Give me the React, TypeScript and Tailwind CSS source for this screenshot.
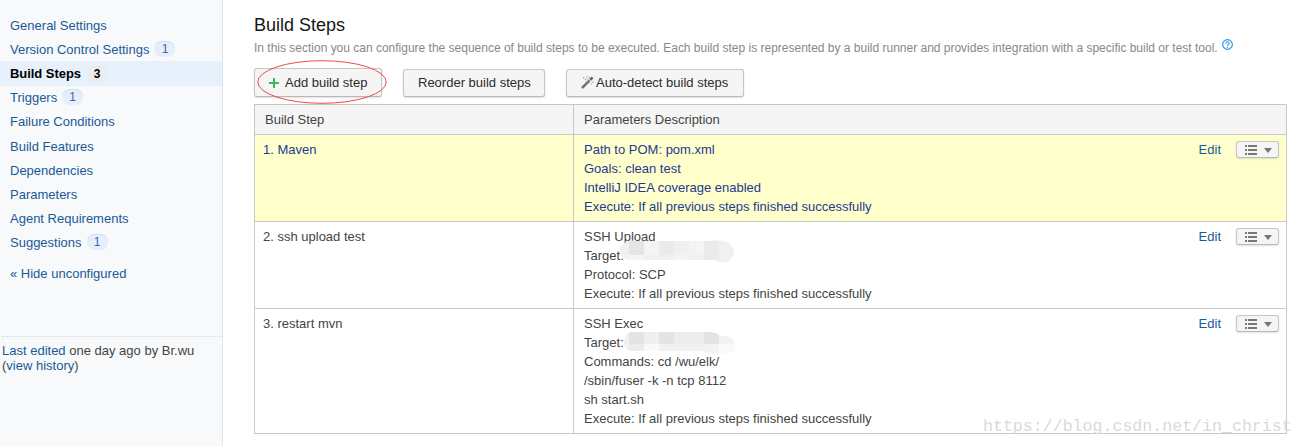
import type { ReactNode } from 'react';

type NavItem = { label: string; count?: number; active?: boolean; className?: string };

const navItems: NavItem[] = [
  { label: 'General Settings' },
  { label: 'Version Control Settings', count: 1 },
  { label: 'Build Steps', count: 3, active: true },
  { label: 'Triggers', count: 1 },
  { label: 'Failure Conditions', className: 'mb-px' },
  { label: 'Build Features' },
  { label: 'Dependencies' },
  { label: 'Parameters' },
  { label: 'Agent Requirements' },
  { label: 'Suggestions', count: 1 },
];

function Sidebar() {
  return (
    <aside className="flex w-[223px] shrink-0 flex-col border-r border-[#dfe3ea] bg-[#f7f9fb] pt-[13px] text-[#1a5a96]">
      <nav>
        {navItems.map((item) => (
          <a
            key={item.label}
            className={`flex items-center pl-[10px] ${
              item.active ? '-mb-px h-[25px] bg-[#e6f1fc] font-bold text-black' : 'h-[24px]'
            } ${item.className ?? ''}`}
          >
            <span className={item.active ? 'tracking-[-0.05px]' : 'pt-[2px]'}>{item.label}</span>
            {item.count !== undefined && (
              <span
                className={`flex h-4 items-center justify-center rounded-full ${
                  item.active
                    ? 'ml-[6px] w-[20px] bg-[#ededed] text-[12px] shadow-[inset_0_1px_0_#e2e6ea]'
                    : 'ml-[5px] w-[21px] bg-[#e5eefa] text-[12px] text-[#3b66a8] shadow-[inset_0_1px_0_#d3dfee]'
                }`}
              >
                {item.count}
              </span>
            )}
          </a>
        ))}
      </nav>
      <a className="mt-[12px] pl-[10px] leading-[15px]">« Hide unconfigured</a>
      <div className="ml-[2px] mt-[55px] border-t border-dotted border-[#d5d9df] pt-[6px] leading-[15px] text-[#444]">
        <div>
          <a className="text-[#1a5a96]">Last edited</a> one day ago by Br.wu
        </div>
        <div>
          (<a className="text-[#1a5a96]">view history</a>)
        </div>
      </div>
    </aside>
  );
}

function Button({ children, className }: { children: ReactNode; className: string }) {
  return (
    <button
      className={`flex items-center rounded-[3px] border border-[#c6c6c6] border-b-[#b8b8b8] bg-[#f5f5f5] text-[#2b2b2b] shadow-[0_1px_2px_rgba(0,0,0,0.12)] ${className}`}
    >
      {children}
    </button>
  );
}

function WandIcon() {
  return (
    <svg className="mb-[2px] mr-[2px] size-[13px]" viewBox="0 0 13 13" fill="none">
      <path d="M1 12 8.6 4.4" stroke="#747474" strokeWidth="2.6" />
      <path d="M9 4 11.6 1.4" stroke="#666" strokeWidth="2.5" />
      <path d="M8.1 3.2 9.8 4.9" stroke="#f5f5f5" strokeWidth=".6" />
      <path
        d="M2 1h1.3v1.3H2zM5.500 0h1.200v1.200H5.500zM3.800 3h1.300v1.300H3.800zM8 1h1v1H8zM11.500 5.500h1.200v1.200h-1.200zM9.700 7.200h1v1.200h-1zM6.300 2.200h1v1h-1z"
        fill="#999"
      />
    </svg>
  );
}

function HelpIcon() {
  return (
    <svg className="ml-[4px] mt-[-8px] size-[11px]" viewBox="0 0 10 10" fill="none" stroke="#2b95e9">
      <circle cx="5" cy="5" r="4.4" strokeWidth="1.1" />
      <path d="M3.5 4c0-2 3-2 3-.2C6.5 5 5 4.8 5 6.1M5 6.9v1" strokeWidth="1" />
    </svg>
  );
}

function MenuButton() {
  return (
    <Button className="ml-[15px] mt-[1px] h-[17px] w-[43px] pl-[8px]">
      <svg className="h-[10px] w-[12px]" viewBox="0 0 12 10" fill="#777">
        <path d="M0 0h2v2H0zM3 0h9v2H3zM0 4h2v2H0zM3 4h9v2H3zM0 8h2v2H0zM3 8h9v2H3z" />
      </svg>
      <svg className="ml-[7px] mt-[1px] h-[5px] w-[8px]" viewBox="0 0 8 5" fill="#777">
        <path d="M0 0h8L4 5z" />
      </svg>
    </Button>
  );
}

function MaskedUpload() {
  return (
    <svg className="absolute left-[34px] top-[18px] h-[24px] w-[118px]" viewBox="0 0 118 24">
      <defs>
        <clipPath id="upload-mask">
          <path d="M8 2Q13 0 20 1H90Q108-1 112 4Q120 12 112 20Q106 25 98 20H12Q6 20 3 15Q-2 8 8 2Z" />
        </clipPath>
      </defs>
      <g clipPath="url(#upload-mask)">
        <path d="M0 0h118v24H0z" fill="#f0f0f0" />
        <path d="M11 0h15v15H11z" fill="#e7e5e4" />
        <path d="M26 0h15v15H26zM71 0h15v15H71z" fill="#f4f4f4" />
        <path d="M41 0h15v15H41zM86 0h15v20H86z" fill="#ebebeb" />
        <path d="M11 15h15v9H11zM56 15h15v9H56z" fill="#f4f4f4" />
      </g>
    </svg>
  );
}

function MaskedExec() {
  return (
    <svg className="absolute left-[40px] top-[22px] h-[24px] w-[111px]" viewBox="0 0 111 24">
      <defs>
        <clipPath id="exec-mask">
          <path d="M6 1H86Q94 2 96 5Q108 4 111 12V18Q108 23 98 22Q88 25 78 20H8Q1 20 0 12Q0 4 6 1Z" />
        </clipPath>
      </defs>
      <g clipPath="url(#exec-mask)">
        <path d="M0 0h111v24H0z" fill="#f1f1f1" />
        <path d="M5 0h15v13H5zM35 0h15v13H35z" fill="#e4e4e4" />
        <path d="M20 0h15v13H20z" fill="#eef0f0" />
        <path d="M50 0h15v13H50zM5 13h15v11H5zM65 0h15v13H65z" fill="#ececec" />
        <path d="M80 0h15v13H80z" fill="#e3e3e3" />
        <path d="M80 13h15v11H80zM95 0h16v13H95z" fill="#f3f3f3" />
        <path d="M20 13h15v11H20zM95 13h16v11H95z" fill="#fafafa" />
      </g>
    </svg>
  );
}

type Step = { name: string; lines: string[]; highlighted?: boolean; mask?: ReactNode };

const steps: Step[] = [
  {
    name: '1. Maven',
    lines: [
      'Path to POM: pom.xml',
      'Goals: clean test',
      'IntelliJ IDEA coverage enabled',
      'Execute: If all previous steps finished successfully',
    ],
    highlighted: true,
  },
  {
    name: '2. ssh upload test',
    lines: ['SSH Upload', 'Target:', 'Protocol: SCP', 'Execute: If all previous steps finished successfully'],
    mask: <MaskedUpload />,
  },
  {
    name: '3. restart mvn',
    lines: [
      'SSH Exec',
      'Target:',
      'Commands: cd /wu/elk/',
      '/sbin/fuser -k -n tcp 8112',
      'sh start.sh',
      'Execute: If all previous steps finished successfully',
    ],
    mask: <MaskedExec />,
  },
];

export default function App() {
  return (
    <div className="relative flex h-[446px] w-[1304px] overflow-hidden whitespace-nowrap bg-white font-['Liberation_Sans',Arial,sans-serif] text-[13px] text-[#444]">
      <Sidebar />
      <main className="flex-1 pl-[31px] pr-[17px] pt-[14px]">
        <h1 className="text-[18px] leading-[22px] text-[#151515]">Build Steps</h1>
        <p className="mt-[4px] flex h-[16px] items-center text-[12px] text-[#888]">
          <span className="tracking-[-0.005px]">
            In this section you can configure the sequence of build steps to be executed. Each build step is represented
            by a build runner and provides integration with a specific build or test tool.
          </span>
          <HelpIcon />
        </p>
        <div className="relative mt-[12px] flex h-[29px]">
          <Button className="w-[128px] pl-[14px]">
            <svg className="mr-[6px] size-[10px]" viewBox="0 0 10 10">
              <path d="M5 0v10M0 5h10" stroke="#3cb95d" strokeWidth="2" />
            </svg>
            Add build step
          </Button>
          <Button className="ml-[21px] mt-px w-[142px] pl-[14px]">Reorder build steps</Button>
          <Button className="ml-[21px] mt-px w-[178px] pl-[14px]">
            <WandIcon />
            Auto-detect build steps
          </Button>
          <svg className="absolute left-[3px] top-[-8px] h-[44px] w-[130px]" viewBox="0 0 130 44" fill="none">
            <ellipse cx="65" cy="22" rx="64.2" ry="21.3" stroke="#f04848" />
          </svg>
        </div>

        <div className="mt-[7px] border border-[#c8c8c8]">
          <div className="flex h-[29px] items-center bg-[#f5f5f5]">
            <div className="flex h-full w-[319px] items-center border-r border-[#c8c8c8] pl-[10px]">Build Step</div>
            <div className="pl-[10px]">Parameters Description</div>
          </div>
          {steps.map((step) => (
            <div
              key={step.name}
              className={`flex border-t border-[#c8c8c8] leading-[19px] ${
                step.highlighted ? 'bg-[#ffffcc] text-[#253a8e]' : ''
              }`}
            >
              <div className="w-[319px] border-r border-[#c8c8c8] py-[5px] pl-[8px]">{step.name}</div>
              <div className="relative flex-1 py-[5px] pl-[10px]">
                {step.lines.map((line) => (
                  <div key={line}>{line}</div>
                ))}
                {step.mask && <div className="absolute left-[10px] top-0">{step.mask}</div>}
              </div>
              <div className="flex items-start py-[5px] pr-[7px]">
                <a className="text-[#1a5a96]">Edit</a>
                <MenuButton />
              </div>
            </div>
          ))}
        </div>
      </main>
      <div className="absolute left-[983px] top-[416px] font-['Liberation_Mono',monospace] text-[16.6px] leading-[22px] text-[#dadad5]">
        https://blog.csdn.net/in_christ
      </div>
    </div>
  );
}
